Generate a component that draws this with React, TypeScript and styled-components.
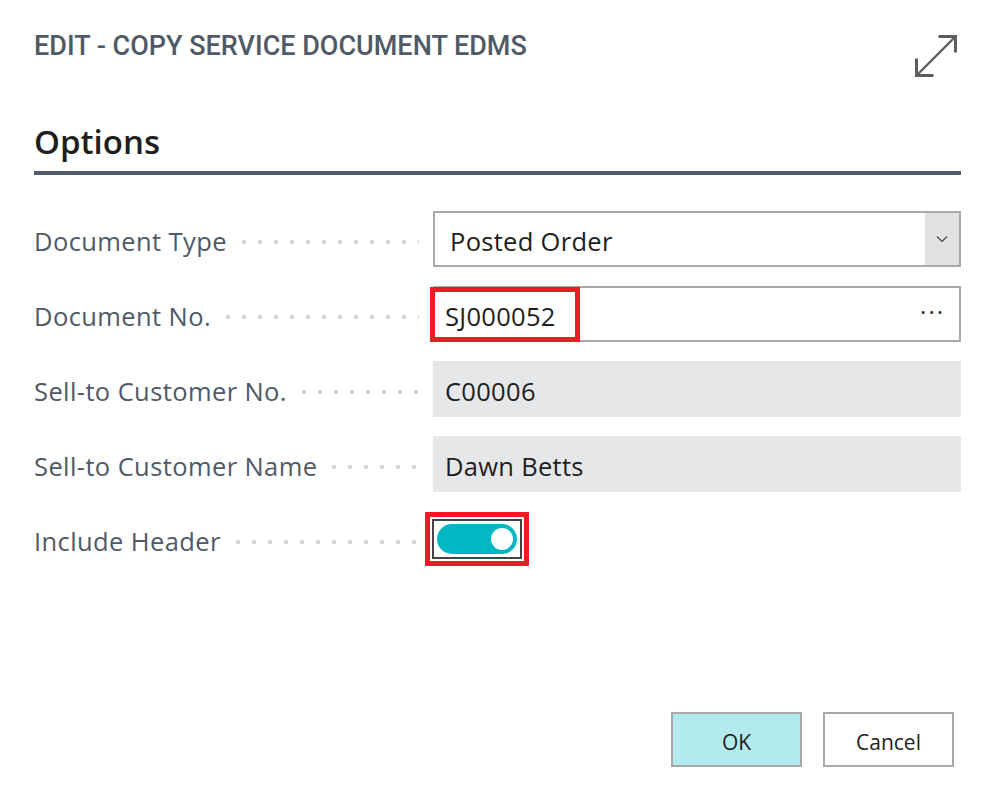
import styled, { createGlobalStyle } from 'styled-components';

const GlobalStyle = createGlobalStyle`
  html, body {
    margin: 0;
    padding: 0;
    background: #ffffff;
  }
  body {
    font-family: "Open Sans", "Noto Sans", sans-serif;
  }
`;

type Row = {
  label: string;
  kind: 'select' | 'lookup' | 'readonly' | 'toggle';
  value?: string;
};

const rows: Row[] = [
  { label: 'Document Type', kind: 'select', value: 'Posted Order' },
  { label: 'Document No.', kind: 'lookup', value: 'SJ000052' },
  { label: 'Sell-to Customer No.', kind: 'readonly', value: 'C00006' },
  { label: 'Sell-to Customer Name', kind: 'readonly', value: 'Dawn Betts' },
  { label: 'Include Header', kind: 'toggle' },
];

const ExpandIcon = () => (
  <svg width="44" height="44" viewBox="0 0 44 44" fill="none" stroke="#5a5e63" strokeWidth="3">
    <path d="M3 41 L41 3" strokeWidth="2.4" />
    <path d="M26 2.5 H41.5 V17" strokeLinecap="square" />
    <path d="M2.5 26 V41.5 H18" strokeLinecap="square" />
  </svg>
);

const Chevron = () => (
  <svg width="12" height="8" viewBox="0 0 12 8" fill="none" stroke="#444" strokeWidth="1.2">
    <path d="M1 1.5 L6 6.5 L11 1.5" />
  </svg>
);

const App = () => {
  return (
    <>
      <GlobalStyle />
      <Dialog>
        <Header>
          <Title>EDIT - COPY SERVICE DOCUMENT EDMS</Title>
          <IconButton>
            <ExpandIcon />
          </IconButton>
        </Header>

        <Section>
          <SectionTitle>Options</SectionTitle>
        </Section>

        <Form>
          {rows.map((row) => (
            <FieldRow key={row.label}>
              <LabelCell>
                <Label>{row.label}</Label>
                <Leader />
              </LabelCell>
              {row.kind === 'select' && (
                <InputBox>
                  <InputText $pad={17}>{row.value}</InputText>
                  <SelectButton>
                    <Chevron />
                  </SelectButton>
                </InputBox>
              )}
              {row.kind === 'lookup' && (
                <InputBox>
                  <InputText $pad={12}>{row.value}</InputText>
                  <Highlight />
                  <Ellipsis>···</Ellipsis>
                </InputBox>
              )}
              {row.kind === 'readonly' && (
                <ReadOnlyBox>{row.value}</ReadOnlyBox>
              )}
              {row.kind === 'toggle' && (
                <ToggleCell>
                  <ToggleMark>
                    <FocusRing>
                      <Track>
                        <Knob />
                      </Track>
                    </FocusRing>
                  </ToggleMark>
                </ToggleCell>
              )}
            </FieldRow>
          ))}
        </Form>

        <Footer>
          <Button $primary>OK</Button>
          <Button>Cancel</Button>
        </Footer>
      </Dialog>
    </>
  );
};

export default App;

const Dialog = styled.div`
  width: 993px;
  height: 804px;
  box-sizing: border-box;
  padding: 0 32px 0 34px;
  display: flex;
  flex-direction: column;
`;

const Header = styled.div`
  display: flex;
  justify-content: space-between;
  align-items: flex-start;
  padding-top: 31px;
  height: 76px;
  box-sizing: border-box;
`;

const Title = styled.h1`
  margin: 0;
  font-family: Roboto, "Liberation Sans", sans-serif;
  font-size: 27px;
  font-weight: 500;
  white-space: nowrap;
  color: #505a66;
  line-height: 30px;
`;

const IconButton = styled.div`
  width: 44px;
  height: 44px;
  margin-top: 3px;
  margin-right: 3px;
`;

const Section = styled.div`
  margin-top: 45px;
  border-bottom: 4px solid #505c6d;
  padding-bottom: 8px;
`;

const SectionTitle = styled.h2`
  margin: 0;
  font-family: "Open Sans", "Noto Sans", sans-serif;
  font-size: 33px;
  font-weight: 600;
  color: #1e1e1e;
  line-height: 42px;
`;

const Form = styled.div`
  margin-top: 36px;
  display: flex;
  flex-direction: column;
  gap: 19px;
`;

const FieldRow = styled.div`
  display: grid;
  grid-template-columns: 399px 1fr;
  height: 56px;
`;

const LabelCell = styled.div`
  display: flex;
  align-items: center;
  padding-right: 14px;
  padding-top: 3px;
`;

const Label = styled.span`
  font-size: 25.5px;
  color: #505a66;
  white-space: nowrap;
  letter-spacing: 0.4px;
`;

const Leader = styled.span`
  flex: 1;
  height: 6px;
  margin-left: 9px;
  margin-top: 2px;
  background-image: radial-gradient(circle, #cfd4d9 2px, transparent 2.5px);
  background-size: 16px 6px;
  background-position: left center;
  background-repeat: repeat-x;
`;

const InputBox = styled.div`
  position: relative;
  display: flex;
  align-items: center;
  border: 2px solid #a9a9a9;
  box-sizing: border-box;
  background: #ffffff;
`;

const InputText = styled.span<{ $pad: number }>`
  flex: 1;
  padding-left: ${(p) => p.$pad - 2}px;
  padding-top: 3px;
  font-size: 25.5px;
  color: #1e1e1e;
  letter-spacing: 0.3px;
`;

const SelectButton = styled.div`
  width: 34px;
  align-self: stretch;
  background: #e1e1e1;
  display: flex;
  align-items: center;
  justify-content: center;
`;

const Ellipsis = styled.span`
  padding-right: 14px;
  font-size: 24px;
  font-weight: 400;
  letter-spacing: 2px;
  color: #333;
  line-height: 1;
  margin-top: -4px;
`;

const Highlight = styled.div`
  position: absolute;
  left: -5px;
  top: -1px;
  width: 150px;
  height: 55px;
  box-sizing: border-box;
  border: 5px solid #ed1c24;
  pointer-events: none;
`;

const ReadOnlyBox = styled.div`
  display: flex;
  align-items: center;
  padding-left: 12px;
  padding-top: 3px;
  background: #e6e7e9;
  font-size: 25.5px;
  letter-spacing: 0.3px;
  color: #1e1e1e;
`;

const ToggleCell = styled.div`
  display: flex;
  align-items: center;
  margin-left: -8px;
`;

const ToggleMark = styled.div`
  border: 5px solid #ed1c24;
  padding: 2px;
  background: #fff;
`;

const FocusRing = styled.div`
  border: 2px solid #444444;
  padding: 3px;
`;

const Track = styled.div`
  width: 80px;
  height: 30px;
  border-radius: 15px;
  background: #00b7c3;
  display: flex;
  align-items: center;
  justify-content: flex-end;
  padding-right: 4px;
  box-sizing: border-box;
`;

const Knob = styled.div`
  width: 22px;
  height: 22px;
  border-radius: 50%;
  background: #ffffff;
`;

const Footer = styled.div`
  margin-top: auto;
  margin-bottom: 37px;
  display: flex;
  justify-content: flex-end;
  gap: 21px;
  padding-right: 7px;
`;

const Button = styled.button<{ $primary?: boolean }>`
  width: 131px;
  height: 55px;
  box-sizing: border-box;
  border: 2px solid #a9a9a9;
  background: ${(p) => (p.$primary ? '#b3eaed' : '#ffffff')};
  font-family: "Open Sans", "Noto Sans", sans-serif;
  font-size: 21px;
  color: #222222;
  padding: 0;
  padding-top: 4px;
`;
